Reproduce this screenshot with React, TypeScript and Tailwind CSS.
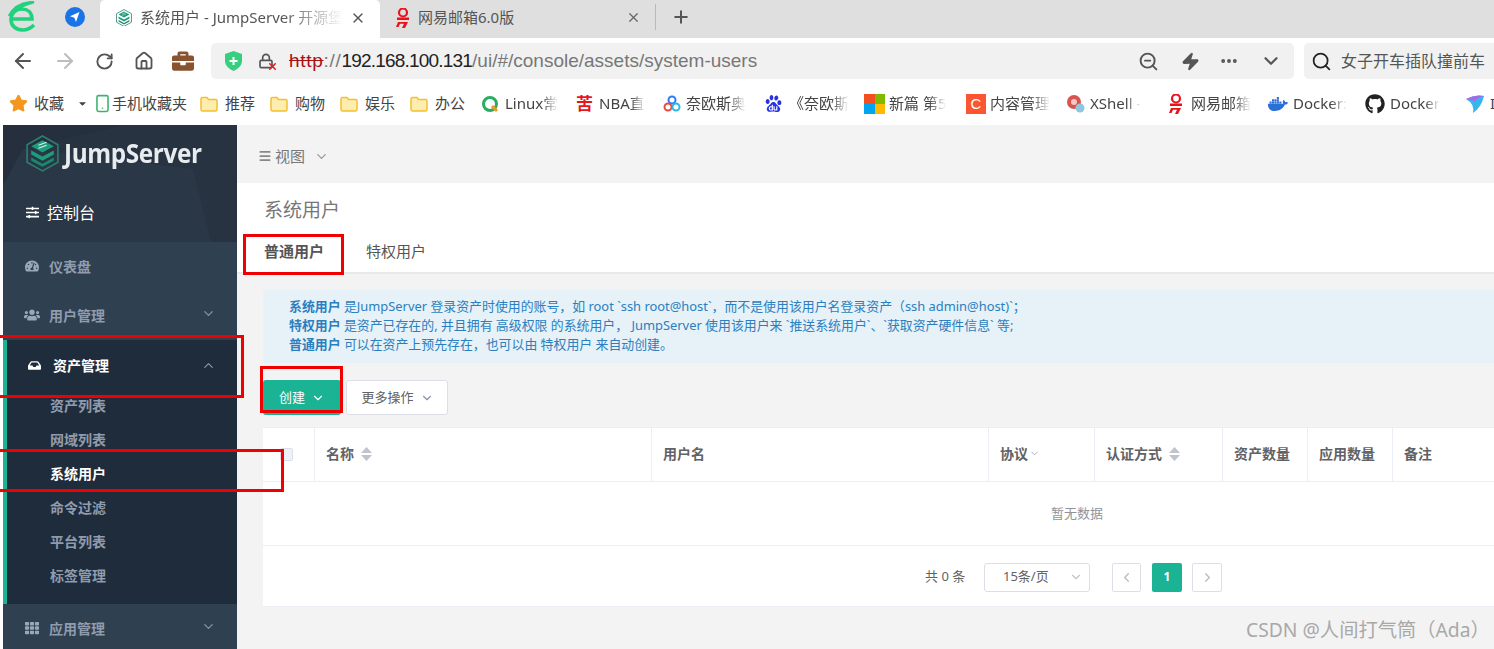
import React from "react";
import { ArrowLeft, ArrowRight, RotateCw, Home, ChevronDown, ChevronUp, ChevronLeft, ChevronRight, X, Plus, ZoomOut, Zap, MoreHorizontal, Search, Star, Menu, Smartphone, Lock } from "lucide-react";
import { FaBriefcase, FaTachometerAlt, FaUsers, FaInbox, FaTh, FaSlidersH, FaGithub, FaDocker, FaCaretDown } from "react-icons/fa";
import { SiBaidu } from "react-icons/si";

const EIcon = () => (
  <svg width="30" height="33" viewBox="0 0 30 33" fill="none" stroke="#1fd27c" strokeWidth="3.6">
    <path d="M5 18 H25 C25 11 20 8 15 8 C8.5 8 4 12.5 4 18.5 C4 25 9 29 15.5 29 C20 29 24 27 27 24" />
    <path d="M2 15 C6 7 14 1.5 27 1 C21 2.5 14 5 9 10" strokeWidth="2.6" />
  </svg>
);
const Compass = () => (
  <svg width="20" height="20" viewBox="0 0 20 20"><circle cx="10" cy="10" r="10" fill="#1a73e8" /><path d="M14.5 5 L11 15 L9.4 10.8 L5 9.2 Z" fill="#fff" /></svg>
);
const JsLogo = ({ s = 18 }: { s?: number }) => (
  <svg width={s} height={s * 1.12} viewBox="0 0 32 36" fill="none">
    <path d="M16 1 L31 9.5 V26.5 L16 35 L1 26.5 V9.5 Z" stroke="#2f7d6e" strokeWidth="1.6" />
    <path d="M16 5 L27 11 L16 17 L5 11 Z" fill="#1e9c7c" />
    <path d="M5 15 L16 21 L27 15 V19 L16 25 L5 19 Z" fill="#1e9c7c" />
    <path d="M5 22 L16 28 L27 22 V25 L16 31 L5 25 Z" fill="#1a8a6e" />
    <path d="M12 10 L20 7 M12 13 L20 10" stroke="#d6f2ea" strokeWidth="1" />
  </svg>
);
const Net = () => (
  <svg width="16" height="20" viewBox="0 0 16 20" fill="#e8141c">
    <circle cx="8" cy="4.5" r="4" fill="none" stroke="#e8141c" strokeWidth="2.2" />
    <path d="M2 9.5 H14 V12 H2 Z M3 14 H13 L10 20 H7 L9 15.8 H5 L3.5 19 H1 Z" />
  </svg>
);
const Folder = () => (
  <svg width="18" height="16" viewBox="0 0 18 16"><path d="M1 3 Q1 1.5 2.5 1.5 H7 L8.5 3.5 H16 Q17 3.5 17 5 V13.5 Q17 15 15.5 15 H2.5 Q1 15 1 13.5 Z" fill="#fdeeb0" stroke="#f5c02e" strokeWidth="1.5" /></svg>
);
const Ms = () => (
  <div className="grid grid-cols-2 gap-0 w-[21px] h-[20px] shrink-0">
    <div className="bg-[#f25022]" /><div className="bg-[#7fba00]" /><div className="bg-[#00a4ef]" /><div className="bg-[#ffb900]" />
  </div>
);

const fade = "[mask-image:linear-gradient(90deg,#000_70%,transparent)]";

const Bm = ({ icon, text, w, width, gap = "gap-[3px]" }: { icon: React.ReactNode; text: string; w?: boolean; width: string; gap?: string }) => (
  <div className={`flex items-center ${gap} shrink-0 ${width}`}>
    <span className="shrink-0 flex items-center">{icon}</span>
    <span className={`text-[15px] text-[#444] whitespace-nowrap ${w ? fade : ""}`}>{text}</span>
  </div>
);

const Toolbar = () => (
  <>
    <div className="h-[38px] bg-[#dfdfdf] flex items-end">
      <div className="w-[100px] h-[38px] flex items-center pl-[7px] pb-[4px] gap-[28px] shrink-0">
        <EIcon /><Compass />
      </div>
      <div className="w-[280px] h-[38px] bg-white rounded-t-[5px] flex items-center pl-[16px] pr-[14px] pb-[3px] shrink-0">
        <JsLogo s={16} />
        <span className={`ml-[8px] text-[15px] text-[#555] whitespace-nowrap ${fade}`}>系统用户 - JumpServer 开源堡</span>
        <X size={16} className="ml-auto text-[#555]" />
      </div>
      <div className="w-[275px] h-[38px] flex items-center pl-[15px] pr-[14px] pb-[3px] shrink-0">
        <Net />
        <span className="ml-[7px] text-[15px] text-[#555]">网易邮箱6.0版</span>
        <X size={15} className="ml-auto text-[#666]" />
      </div>
      <div className="w-px h-[26px] bg-[#b9b9b9] self-center -translate-y-[2px]" />
      <Plus size={20} strokeWidth={2.4} className="ml-[15px] self-center text-[#555] -translate-y-[2px]" />
    </div>
    <div className="h-[46px] bg-white flex items-center pl-[11px]">
      <ArrowLeft size={24} className="text-[#555] shrink-0" />
      <ArrowRight size={24} className="ml-[18px] text-[#bdbdbd] shrink-0" />
      <RotateCw size={19} strokeWidth={2.4} className="ml-[18px] text-[#555] shrink-0" />
      <Home size={20} strokeWidth={2.2} className="ml-[20px] text-[#555] shrink-0" />
      <FaBriefcase size={22} className="ml-[18px] text-[#8a5330] shrink-0" />
      <div className="ml-[17px] w-[1083px] h-[36px] rounded-[5px] bg-[#f1f1f1] flex items-center pl-[14px] pr-[12px] shrink-0">
        <svg width="17" height="20" viewBox="0 0 17 20"><path d="M8.5 0 L17 3 V10 C17 15 12 18.5 8.5 20 C5 18.5 0 15 0 10 V3 Z" fill="#35cf7f" /><path d="M8.5 6 V14 M4.5 10 H12.5" stroke="#fff" strokeWidth="2" /></svg>
        <span className="relative ml-[16px] shrink-0 flex">
          <Lock size={16} strokeWidth={2.5} className="text-[#555]" />
          <X size={11} strokeWidth={3.5} className="absolute -right-[4px] -bottom-[3px] text-[#e0201c]" />
        </span>
        <span className="ml-[15px] pb-[2px] text-[19px] leading-none font-['Liberation_Sans'] whitespace-nowrap">
          <span className="text-[#a11] line-through tracking-[0.7px]">http</span><span className="text-[#777] tracking-[0.7px]">://</span><span className="text-[#222] tracking-[-0.8px]">192.168.100.131</span><span className="text-[#777]">/ui/#/console/assets/system-users</span>
        </span>
        <ZoomOut size={21} strokeWidth={2.2} className="ml-auto text-[#555] -translate-x-[2px]" />
        <Zap size={19} fill="#555" className="ml-[20px] text-[#555]" />
        <MoreHorizontal size={20} strokeWidth={2.6} className="ml-[21px] text-[#555] -translate-x-[2px]" />
        <ChevronDown size={22} strokeWidth={2.4} className="ml-[19px] text-[#555]" />
      </div>
      <div className="ml-[10px] flex-1 h-[36px] rounded-l-[5px] bg-[#f1f1f1] flex items-center pl-[7px] overflow-hidden">
        <Search size={21} className="text-[#222] shrink-0" />
        <span className="ml-[9px] text-[16px] leading-none text-[#555] whitespace-nowrap">女子开车插队撞前车</span>
      </div>
    </div>
    <div className="h-[41px] bg-white flex items-center pl-[9px] pb-[2px] overflow-hidden">
      <Bm width="w-[68px]" icon={<Star size={19} fill="#f5961e" className="text-[#f5961e]" />} text="收藏" gap="gap-[6px]" />
      <FaCaretDown size={11} className="text-[#444] shrink-0" />
      <div className="w-[6px] shrink-0" />
      <Bm width="w-[106px]" icon={<Smartphone size={19} className="text-[#3cb371] -mx-[1px]" />} text="手机收藏夹" gap="gap-[1px]" />
      <Bm width="w-[70px]" icon={<Folder />} text="推荐" gap="gap-[7px]" />
      <Bm width="w-[70px]" icon={<Folder />} text="购物" gap="gap-[7px]" />
      <Bm width="w-[70px]" icon={<Folder />} text="娱乐" gap="gap-[7px]" />
      <Bm width="w-[71px]" icon={<Folder />} text="办公" gap="gap-[7px]" />
      <Bm width="w-[95px]" w icon={<svg width="18" height="18" viewBox="0 0 18 18" fill="none"><circle cx="9" cy="9" r="6.5" stroke="#27ae60" strokeWidth="3" /><path d="M11 11 L16 16" stroke="#f5961e" strokeWidth="3" /></svg>} text="Linux常" gap="gap-[6px]" />
      <div className="w-[87px] shrink-0 flex items-center gap-[6px]"><span className="text-[17px] leading-none text-[#e8141c] font-bold shrink-0">苦</span><span className={`text-[15px] text-[#444] whitespace-nowrap ${fade}`}>NBA直</span></div>
      <Bm width="w-[102px]" w icon={<svg width="18" height="18" viewBox="0 0 18 18" fill="none" strokeWidth="2"><circle cx="9" cy="5" r="3.5" stroke="#2d7cf6" /><circle cx="5" cy="12" r="3.5" stroke="#e94a3d" /><circle cx="13" cy="12" r="3.5" stroke="#2cb5e8" /></svg>} text="奈欧斯奥" gap="gap-[5px]" />
      <Bm width="w-[99px]" w icon={<SiBaidu size={17} className="text-[#2932e1]" />} text="《奈欧斯" gap="gap-[7px]" />
      <div className="w-[102px] shrink-0 flex items-center gap-[4px]"><Ms /><span className={`text-[15px] text-[#444] whitespace-nowrap ${fade}`}>新篇 第5</span></div>
      <div className="w-[100px] shrink-0 flex items-center gap-[4px]"><span className="w-[20px] h-[20px] bg-[#fc5531] text-white text-[15px] leading-[20px] text-center shrink-0 font-['Liberation_Sans']">C</span><span className={`text-[15px] text-[#444] whitespace-nowrap ${fade}`}>内容管理</span></div>
      <Bm width="w-[102px]" w icon={<svg width="19" height="19" viewBox="0 0 19 19"><circle cx="8" cy="8" r="7" fill="#d9544f" /><circle cx="8" cy="8" r="3" fill="#f5c6c4" /><circle cx="14" cy="14" r="4.5" fill="#8fc7df" /></svg>} text="XShell -" gap="gap-[5px]" />
      <Bm width="w-[100px]" w icon={<Net />} text="网易邮箱" gap="gap-[7px]" />
      <Bm width="w-[97px]" w icon={<FaDocker size={20} className="text-[#2a6fd6]" />} text="Docker:" gap="gap-[5px]" />
      <Bm width="w-[100px]" w icon={<FaGithub size={20} className="text-[#222]" />} text="Docker" gap="gap-[5px]" />
      <svg width="20" height="20" viewBox="0 0 20 20" className="shrink-0"><path d="M1 5 Q10 0 19 2 Q16 14 8 19 Q10 10 1 5 Z" fill="#37b6ee" /><path d="M1 5 Q10 0 19 2 Q13 3 10 7 Z" fill="#a868e8" /></svg>
      <span className="ml-[5px] text-[15px] text-[#444]">I</span>
    </div>
  </>
);

const NavItem = ({ icon, text, chevron }: { icon: React.ReactNode; text: string; chevron?: boolean }) => (
  <div className="h-[48px] shrink-0 flex items-center pl-[21px] pr-[21px]">
    <span className="w-[16px] flex justify-center text-[#9aa7b8]">{icon}</span>
    <span className="ml-[9px] text-[14px] font-bold text-[#8f9cae]">{text}</span>
    {chevron && <ChevronDown size={15} className="ml-auto text-[#8794a6] -translate-y-[2px]" />}
  </div>
);

const SubItem = ({ text, active }: { text: string; active?: boolean }) => (
  <div className={`h-[34px] flex items-center pl-[43px] text-[14px] font-bold ${active ? "text-white" : "text-[#8f9cae]"}`}>{text}</div>
);

const Sidebar = () => (
  <aside className="w-[234px] ml-[3px] shrink-0 bg-[#2f4050] flex flex-col">
    <div className="relative h-[117px] shrink-0 bg-[#273341] overflow-hidden">
      <svg className="absolute inset-0" width="234" height="117" viewBox="0 0 234 117">
        <path d="M0 60 L20 24 L190 44 L208 117 H0 Z" fill="#2a3746" />
        <path d="M0 0 H120 L20 24 L0 60 Z" fill="#252f3e" />
      </svg>
      <div className="relative flex items-center pl-[23px] pt-[10px]">
        <JsLogo s={33} />
        <span className="ml-[5px] text-[27px] leading-[36px] font-bold text-[#e8ecef] font-['Open_Sans'] tracking-[-0.4px] scale-x-[0.9] origin-left">JumpServer</span>
      </div>
      <div className="relative flex items-center pl-[23px] mt-[29px]">
        <FaSlidersH size={13} className="text-white" />
        <span className="ml-[8px] text-[16px] text-white">控制台</span>
      </div>
    </div>
    <div className="flex flex-col">
      <NavItem icon={<FaTachometerAlt size={14} />} text="仪表盘" />
      <div className="mt-[1px]">
        <NavItem icon={<FaUsers size={16} />} text="用户管理" chevron />
      </div>
    </div>
    <div className="bg-[#1f2c3c] border-l-4 border-[#1ab394] h-[264px] shrink-0 mt-[1px]">
      <div className="h-[48px] pt-[2px] flex items-center pl-[21px] pr-[21px]">
        <FaInbox size={13} className="text-white" />
        <span className="ml-[12px] text-[14px] font-bold text-white">资产管理</span>
        <ChevronUp size={15} className="ml-auto text-[#8794a6]" />
      </div>
      <SubItem text="资产列表" />
      <SubItem text="网域列表" />
      <SubItem text="系统用户" active />
      <SubItem text="命令过滤" />
      <SubItem text="平台列表" />
      <SubItem text="标签管理" />
    </div>
    <NavItem icon={<FaTh size={14} />} text="应用管理" chevron />
  </aside>
);

const Sort = () => (
  <svg width="11" height="14" viewBox="0 0 11 14" fill="#c0c4cc" className="shrink-0"><path d="M5.5 0 L11 6 H0 Z M0 8 H11 L5.5 14 Z" /></svg>
);

const Th = ({ children, last }: { children: React.ReactNode; last?: boolean }) => (
  <div className={`flex items-center pl-[11px] pb-[2px] gap-[7px] text-[14px] font-bold text-[#606266] whitespace-nowrap ${last ? "" : "border-r border-[#ebeef5]"}`}>{children}</div>
);

const Main = () => (
  <main className="flex-1 min-w-0 bg-[#f3f3f4] overflow-hidden flex flex-col">
    <div className="h-[58px] flex items-center pl-[21px] pt-[4px] shrink-0 text-[#777]">
      <Menu size={14} strokeWidth={3} className="text-[#888]" />
      <span className="ml-[3px] text-[15px]">视图</span>
      <ChevronDown size={15} className="ml-[9px] text-[#999]" />
    </div>
    <div className="h-[91px] bg-white border-b-2 border-[#e7eaec] shrink-0 pl-[27px]">
      <div className="pt-[14px] text-[19px] leading-[26px] text-[#777]">系统用户</div>
      <div className="mt-[16px] flex text-[15px] leading-[24px] text-[#555]">
        <span className="font-bold">普通用户</span>
        <span className="ml-[42px]">特权用户</span>
      </div>
    </div>
    <div className="pl-[26px] pt-[16px] w-[1654px]">
      <div className="h-[73px] bg-[#e6f1f8] rounded-[3px] pl-[26px] pt-[7px] text-[12.9px] leading-[19px] text-[#2b7fbf] whitespace-nowrap">
        <div><b>系统用户</b> 是JumpServer 登录资产时使用的账号，如 root `ssh root@host`，而不是使用该用户名登录资产（ssh admin@host)`；</div>
        <div><b>特权用户</b> 是资产已存在的, 并且拥有 高级权限 的系统用户， JumpServer 使用该用户来 `推送系统用户`、`获取资产硬件信息` 等;</div>
        <div><b>普通用户</b> 可以在资产上预先存在，也可以由 特权用户 来自动创建。</div>
      </div>
      <div className="mt-[17px] flex h-[35px]">
        <button className="w-[78px] bg-[#1ab394] rounded-[3px] text-white text-[13px] flex items-center justify-center gap-[6px]">创建<ChevronDown size={14} /></button>
        <button className="ml-[5px] w-[102px] pl-[1px] bg-white border border-[#dcdfe6] rounded-[3px] text-[#606266] text-[13px] flex items-center justify-center gap-[6px]">更多操作<ChevronDown size={14} className="text-[#8a94a6]" /></button>
      </div>
      <div className="mt-[12px] bg-white rounded-[2px] h-[180px]">
        <div className="h-[55px] grid grid-cols-[52px_337px_337px_106px_128px_85px_85px_1fr] border border-[#ebeef5] border-l-0">
          <div className="flex items-center justify-end pr-[21px] border-r border-[#ebeef5]"><span className="w-[13px] h-[13px] bg-[#eef1f8] border border-[#dcdfe6] rounded-[2px]" /></div>
          <Th>名称<Sort /></Th>
          <Th>用户名</Th>
          <Th><span className="-mr-[6px]">协议</span><ChevronDown size={11} className="text-[#aaa]" /></Th>
          <Th>认证方式<Sort /></Th>
          <Th>资产数量</Th>
          <Th>应用数量</Th>
          <Th last>备注</Th>
        </div>
        <div className="h-[64px] border-b border-[#ebeef5] flex items-center justify-center text-[13px] text-[#909399]">暂无数据</div>
        <div className="h-[61px] pt-[2px] flex items-center pl-[662px] border-b border-[#ebeef5]">
          <span className="text-[13px] text-[#606266] w-[59px] whitespace-nowrap">共 0 条</span>
          <div className="w-[106px] h-[29px] border border-[#dcdfe6] rounded-[3px] flex items-center pl-[18px] pr-[6px] text-[13px] text-[#606266]">15条/页<ChevronDown size={14} className="ml-auto text-[#c0c4cc]" /></div>
          <div className="ml-[22px] w-[29px] h-[29px] border border-[#dcdfe6] rounded-[2px] flex items-center justify-center"><ChevronLeft size={15} className="text-[#b4bcc8]" /></div>
          <div className="ml-[11px] w-[30px] h-[29px] rounded-[2px] bg-[#1ab394] text-white text-[12px] font-bold flex items-center justify-center">1</div>
          <div className="ml-[10px] w-[30px] h-[29px] border border-[#dcdfe6] rounded-[2px] flex items-center justify-center"><ChevronRight size={15} className="text-[#b4bcc8]" /></div>
        </div>
      </div>
    </div>
  </main>
);

const Red = ({ c }: { c: string }) => <div className={`absolute border-[3px] border-[#f00000] pointer-events-none ${c}`} />;

export default function App() {
  return (
    <div className="relative w-[1494px] h-[649px] overflow-hidden bg-white font-['Noto_Sans','Noto_Sans_CJK_SC',sans-serif]">
      <Toolbar />
      <div className="flex h-[524px] bg-white">
        <Sidebar />
        <Main />
      </div>
      <Red c="left-[243px] top-[234px] w-[101px] h-[41px]" />
      <Red c="-left-[4px] top-[335px] w-[248px] h-[63px]" />
      <Red c="left-[260px] top-[366px] w-[83px] h-[47px]" />
      <Red c="-left-[4px] top-[449px] w-[288px] h-[43px]" />
      <div className="absolute left-[1246px] top-[617px] text-[19.3px] leading-[26px] text-[#a8a8a8] whitespace-nowrap">CSDN @人间打气筒（Ada）</div>
    </div>
  );
}
